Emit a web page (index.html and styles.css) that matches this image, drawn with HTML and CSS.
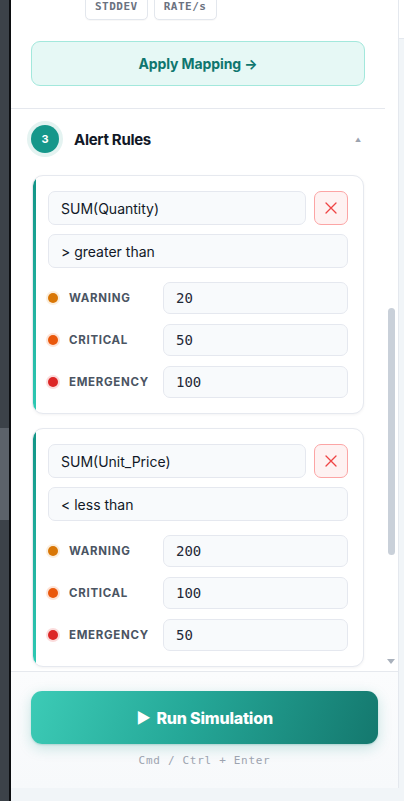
FILE: index.html
```html
<!DOCTYPE html>
<html lang="en">
<head>
<meta charset="utf-8">
<title>Alert Rules</title>
<link rel="stylesheet" href="styles.css">
</head>
<body>
<div class="app">
  <div class="edge"><div class="edge-thumb"></div></div>
  <div class="workspace">
    <div class="workspace-row">
      <aside class="panel">
        <div class="scroll">
          <div class="scroll-content">
            <div class="agg-chips">
              <span class="chip">STDDEV</span>
              <span class="chip">RATE/s</span>
            </div>
            <button class="apply-btn">Apply Mapping →</button>
            <div class="divider"></div>

            <div class="section-head">
              <span class="step">3</span>
              <span class="section-title">Alert Rules</span>
              <span class="caret">▲</span>
            </div>

            <div class="rules">
              <div class="rule-card">
                <div class="rule-top">
                  <div class="field metric">SUM(Quantity)</div>
                  <button class="del-btn" aria-label="Remove rule">
                    <svg width="12" height="12" viewBox="0 0 12 12"><path d="M1 1L11 11M11 1L1 11" stroke="#ef4444" stroke-width="1.3" stroke-linecap="round"/></svg>
                  </button>
                </div>
                <div class="field op">&gt; greater than</div>
                <div class="thresholds">
                  <div class="th-row">
                    <span class="dot warn"></span><span class="th-label">WARNING</span>
                    <div class="field num">20</div>
                  </div>
                  <div class="th-row">
                    <span class="dot crit"></span><span class="th-label">CRITICAL</span>
                    <div class="field num">50</div>
                  </div>
                  <div class="th-row">
                    <span class="dot emer"></span><span class="th-label">EMERGENCY</span>
                    <div class="field num">100</div>
                  </div>
                </div>
              </div>

              <div class="rule-card">
                <div class="rule-top">
                  <div class="field metric">SUM(Unit_Price)</div>
                  <button class="del-btn" aria-label="Remove rule">
                    <svg width="12" height="12" viewBox="0 0 12 12"><path d="M1 1L11 11M11 1L1 11" stroke="#ef4444" stroke-width="1.3" stroke-linecap="round"/></svg>
                  </button>
                </div>
                <div class="field op">&lt; less than</div>
                <div class="thresholds">
                  <div class="th-row">
                    <span class="dot warn"></span><span class="th-label">WARNING</span>
                    <div class="field num">200</div>
                  </div>
                  <div class="th-row">
                    <span class="dot crit"></span><span class="th-label">CRITICAL</span>
                    <div class="field num">100</div>
                  </div>
                  <div class="th-row">
                    <span class="dot emer"></span><span class="th-label">EMERGENCY</span>
                    <div class="field num">50</div>
                  </div>
                </div>
              </div>
            </div>
          </div>
          <div class="scrollbar">
            <div class="sb-thumb" style="margin-top:308px;height:247px"></div>
            <div class="sb-arrow"></div>
          </div>
        </div>
        <footer class="run-bar">
          <button class="run-btn"><span class="play">▶</span>Run Simulation</button>
          <div class="shortcut">Cmd / Ctrl + Enter</div>
        </footer>
      </aside>
      <div class="sliver"><div class="sliver-top"></div></div>
    </div>
  </div>
</div>
</body>
</html>
```
FILE: styles.css
```css
* { box-sizing: border-box; }

html, body {
  margin: 0;
  height: 100%;
}

body {
  font-family: Inter, "Noto Sans", sans-serif;
  color: #111827;
  background: #f1f5f8;
  overflow: hidden;
}

button {
  font: inherit;
  cursor: pointer;
}

.app {
  display: flex;
  height: 801px;
}

/* dark host window edge on the left */
.edge {
  width: 11px;
  flex: none;
  background: #3c4249;
  border-right: 2px solid #0c0e11;
  display: flex;
  flex-direction: column;
}

.edge-thumb {
  margin-top: 428px;
  height: 92px;
  background: #5c626a;
}

.workspace {
  flex: 1;
  background: #f1f5f8;
}

.workspace-row {
  display: flex;
  height: 788px;
}

.panel {
  width: 388px;
  flex: none;
  background: #fff;
  border-right: 1px solid #e4e8ee;
  display: flex;
  flex-direction: column;
}

.sliver {
  flex: 1;
}

.sliver-top {
  height: 39px;
  background: #fff;
  border-bottom: 1px solid #e4e8ee;
}

/* scrolling body of the panel */
.scroll {
  height: 671px;
  flex: none;
  display: flex;
  overflow: hidden;
}

.scroll-content {
  width: 374px;
  flex: none;
}

.agg-chips {
  height: 20px;
  padding-left: 74px;
  display: flex;
  align-items: flex-end;
  gap: 6px;
}

.chip {
  flex: none;
  height: 27px;
  padding: 0 9px;
  display: flex;
  align-items: center;
  border: 1px solid #e3e7ed;
  border-radius: 5px;
  background: #fff;
  font-family: "DejaVu Sans Mono", monospace;
  font-size: 11px;
  font-weight: bold;
  letter-spacing: 0.5px;
  color: #6b7280;
  box-shadow: 0 1px 1px rgba(15, 23, 42, 0.03);
}

.apply-btn {
  display: block;
  margin: 21px 20px 0;
  width: 334px;
  height: 45px;
  border: 1px solid #a3e8dc;
  border-radius: 9px;
  background: #e6f8f5;
  color: #0f766e;
  font-size: 14px;
  font-weight: 700;
  letter-spacing: -0.1px;
}

.divider {
  margin-top: 22px;
  height: 1px;
  background: #e5e8ee;
}

.section-head {
  display: flex;
  align-items: center;
  padding: 16px 24px 0 20px;
  box-sizing: content-box;
  height: 28px;
}

.step {
  width: 28px;
  height: 28px;
  flex: none;
  border-radius: 50%;
  background: #15978a;
  box-shadow: 0 0 0 4px #e4f3f1;
  color: #fff;
  font-size: 11px;
  font-weight: 700;
  display: flex;
  align-items: center;
  justify-content: center;
}

.section-title {
  margin-left: 15px;
  font-size: 15px;
  font-weight: 700;
  letter-spacing: -0.3px;
  color: #111827;
  flex: 1;
}

.caret {
  font-size: 6px;
  color: #9ca3af;
}

.rules {
  margin-top: 22px;
  padding: 0 21px;
  display: flex;
  flex-direction: column;
  gap: 14px;
}

.rule-card {
  position: relative;
  overflow: hidden;
  border: 1px solid #e6e9ef;
  border-radius: 11px;
  background: #fff;
  padding: 15px;
  box-shadow: 0 1px 3px rgba(15, 23, 42, 0.05);
}

/* accent stripe down the left side of each rule */
.rule-card::before {
  content: "";
  position: absolute;
  left: 0;
  top: 0;
  bottom: 0;
  width: 3px;
  background: linear-gradient(to bottom, #129486, #2ec9b3);
}

.rule-top {
  display: flex;
  gap: 8px;
}

.field {
  height: 34px;
  display: flex;
  align-items: center;
  padding: 0 12px;
  border: 1px solid #e5e8ef;
  border-radius: 7px;
  background: #f8fafc;
  font-size: 14px;
  color: #111827;
}

.metric {
  flex: 1;
}

.op {
  margin-top: 9px;
}

.del-btn {
  width: 34px;
  height: 34px;
  flex: none;
  padding: 0;
  border: 1px solid #fca5a5;
  border-radius: 7px;
  background: #fef2f2;
  display: flex;
  align-items: center;
  justify-content: center;
}

.thresholds {
  margin-top: 14px;
  display: flex;
  flex-direction: column;
  gap: 10px;
}

.th-row {
  display: flex;
  align-items: center;
}

.dot {
  width: 10px;
  height: 10px;
  flex: none;
  border-radius: 50%;
}

.dot.warn { background: #d97706; box-shadow: 0 0 0 2px #fbeedd; }
.dot.crit { background: #ea580c; box-shadow: 0 0 0 2px #fde3d6; }
.dot.emer { background: #dc2626; box-shadow: 0 0 0 2px #fbdcdc; }

.th-label {
  margin-left: 11px;
  width: 94px;
  flex: none;
  font-size: 11.5px;
  font-weight: 700;
  letter-spacing: 0.7px;
  color: #4b5563;
}

.field.num {
  flex: 1;
  height: 32px;
  font-family: "DejaVu Sans Mono", monospace;
  font-size: 14px;
  color: #1f2937;
}

/* thin scrollbar of the panel body */
.scrollbar {
  flex: 1;
  display: flex;
  flex-direction: column;
  align-items: center;
  padding-right: 1px;
}

.sb-thumb {
  width: 7px;
  background: #c9d0d9;
  border-radius: 4px;
}

.sb-arrow {
  margin-top: auto;
  margin-bottom: 7px;
  width: 0;
  height: 0;
  border-left: 4px solid transparent;
  border-right: 4px solid transparent;
  border-top: 5px solid #a9b1bc;
}

/* bottom action bar */
.run-bar {
  flex: 1;
  border-top: 1px solid #e6e9ee;
  background: linear-gradient(to bottom, #fbfcfd, #f7f9fb);
  padding: 19px 20px 0;
  display: flex;
  flex-direction: column;
  align-items: center;
}

.run-btn {
  width: 347px;
  height: 53px;
  border: none;
  border-radius: 11px;
  background: linear-gradient(110deg, #3ccbb6 0%, #25a898 45%, #14786e 100%);
  box-shadow: 0 4px 14px rgba(20, 150, 135, 0.22), 0 1px 2px rgba(20, 120, 110, 0.2);
  color: #fff;
  font-size: 16px;
  font-weight: 800;
  letter-spacing: -0.2px;
  display: flex;
  align-items: center;
  justify-content: center;
}

.play {
  font-size: 15px;
  margin-right: 6px;
}

.shortcut {
  margin-top: 10px;
  font-family: "DejaVu Sans Mono", monospace;
  font-size: 11px;
  letter-spacing: 0.7px;
  color: #9ca3af;
}
```
